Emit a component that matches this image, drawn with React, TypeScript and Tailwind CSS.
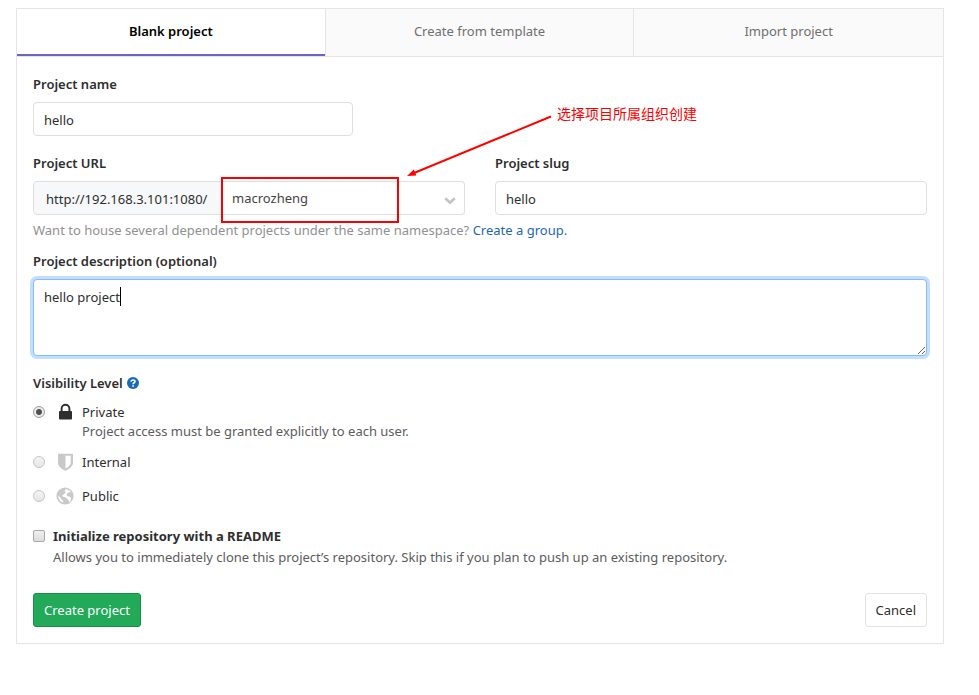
import type { ReactNode } from "react";

const inputClass =
  "block h-[34px] w-full rounded border border-[#dfdfdf] bg-white px-[10px] pt-px text-[#2e2e2e] outline-none";
const labelClass = "mb-2 block font-semibold text-[#2e2e2e]";
const tabClass = "h-[47px] border-[#e5e5e5] bg-[#fafafa] pb-[3px] text-[#707070]";
const radioClass =
  "size-3 shrink-0 appearance-none rounded-full border border-[#c6c6c6] bg-linear-to-b from-[#f4f4f4] to-[#e6e6e6] checked:border-[#9d9d9d] checked:bg-radial checked:from-[#505050] checked:from-35% checked:to-[#ececec] checked:to-50%";

function LockIcon() {
  return (
    <svg width="18" height="18" viewBox="0 0 18 18" fill="none" aria-hidden="true">
      <path d="M5.600 8.500V5.600a3.900 3.900 0 0 1 7.800 0v2.900" stroke="#2e2e2e" strokeWidth="1.900" />
      <rect x="3" y="8" width="13" height="8.500" rx="0.800" fill="#2e2e2e" />
    </svg>
  );
}

function ShieldIcon() {
  return (
    <svg width="18" height="18" viewBox="0 0 18 18" aria-hidden="true">
      <path
        fill="#c9c9c9"
        fillRule="evenodd"
        d="M2 .8h15v8.600c0 3.300-2.700 6.200-7.500 8.400C4.700 15.600 2 12.700 2 9.400V.8Zm7.500 2v12.800c3.400-1.800 5.200-3.900 5.200-6.200V2.800H9.500Z"
      />
    </svg>
  );
}

function GlobeIcon() {
  return (
    <svg width="18" height="18" viewBox="0 0 18 18" aria-hidden="true">
      <circle cx="9" cy="9" r="8.600" fill="#c9c9c9" />
      <path
        fill="#fff"
        d="M9.300 2.500 12.200 2.200l-.6 1.400 1.800-.4 1.800 2.200-1.900-.3-2.200 1.500-.6 1.700 1.500 1.300 2.100.2.900 1.400-.3 2.600-1.500 1.600-.8-2.500-2.600-2.400-2.700-.8-.9-1.300 1.700-1.200 1.900-1.900-1.200-1.300Z"
      />
      <path fill="#fff" d="m2.200 8.600 2.300 2.200 1.100 1.900 1.600 1.100-.1 1.900C4.200 14.700 2.200 12.200 2.200 8.600Z" />
    </svg>
  );
}

function HelpIcon() {
  return (
    <svg width="12" height="12" viewBox="0 0 12 12" fill="none" aria-hidden="true">
      <circle cx="6" cy="6" r="6" fill="#1b69b6" />
      <path d="M4 4.600C4.100 2.500 8 2.400 8 4.500 8 5.800 6.100 5.700 6.100 7.200" stroke="#fff" strokeWidth="1.600" />
      <path d="M5.200 8.200h1.700v1.600H5.200z" fill="#fff" />
    </svg>
  );
}

function VisibilityOption({
  value,
  label,
  icon,
  checked,
  children,
}: {
  value: string;
  label: string;
  icon: ReactNode;
  checked?: boolean;
  children?: ReactNode;
}) {
  return (
    <div>
      <label className="flex h-5 items-center">
        <input type="radio" name="visibility" value={value} defaultChecked={checked} className={radioClass} />
        <span className="ml-[11px] mr-2">{icon}</span>
        {label}
      </label>
      {children && <p className="-mt-px pl-[49px] text-[#5c5c5c]">{children}</p>}
    </div>
  );
}

export default function App() {
  return (
    <main className="min-h-screen bg-white pb-4 pl-4 pr-[35px] pt-2 font-['Noto_Sans','Noto_Sans_CJK_SC',sans-serif] text-[13px] leading-5 text-[#2e2e2e]">
      <div className="border border-[#e5e5e5]">
        <div role="tablist" className="grid grid-cols-3 border-b border-[#e5e5e5]">
          <button role="tab" aria-selected="true" className="flex h-[47px] border-r border-[#e5e5e5] font-semibold text-black">
            <span className="flex h-full flex-1 items-center justify-center border-b-2 border-[#6666c4] pb-px">
              Blank project
            </span>
          </button>
          <button role="tab" aria-selected="false" className={`${tabClass} border-r`}>
            Create from template
          </button>
          <button role="tab" aria-selected="false" className={tabClass}>
            Import project
          </button>
        </div>

        <form className="px-4 pb-4 pt-[17px]" onSubmit={(e) => e.preventDefault()}>
          <label htmlFor="name" className={labelClass}>Project name</label>
          <div className="max-w-80">
            <input id="name" defaultValue="hello" className={inputClass} />
          </div>

          <div className="mt-[17px] grid grid-cols-2 gap-[30px]">
            <div>
              <label htmlFor="namespace" className={labelClass}>Project URL</label>
              <div className="relative flex h-[34px]">
                <span className="flex w-[189px] shrink-0 items-center rounded-l border border-[#dfdfdf] bg-[#f7f8fa] pl-3 pt-px">
                  http://192.168.3.101:1080/
                </span>
                <select
                  id="namespace"
                  defaultValue="macrozheng"
                  className="min-w-0 flex-1 appearance-none rounded-r border border-l-0 border-[#dfdfdf] bg-white pl-[10px] pr-8 text-[#444] outline-none"
                >
                  <option>macrozheng</option>
                </select>
                <svg className="pointer-events-none absolute right-[9px] top-4" width="12" height="8" viewBox="0 0 12 8" fill="none" aria-hidden="true">
                  <path d="m1.200 1.200 4.800 4.600 4.800-4.600" stroke="#c4c4c4" strokeWidth="2.600" />
                </svg>
                <div className="pointer-events-none absolute -top-1 left-[188px] h-[46px] w-[178px] border-2 border-[#fe0000]" />
                <svg className="pointer-events-none absolute -top-[66px] left-[372px]" width="148" height="64" viewBox="0 0 148 64" aria-hidden="true">
                  <path d="M146 1.500 9 58" stroke="#fe0000" strokeWidth="2" />
                  <path d="m2 61 6.800-6.600 2.600 6.200Z" fill="#fe0000" />
                </svg>
                <p className="pointer-events-none absolute -top-[77px] left-[524px] whitespace-nowrap text-[14px] text-[#fe0000]">
                  选择项目所属组织创建
                </p>
              </div>
            </div>
            <div>
              <label htmlFor="slug" className={labelClass}>Project slug</label>
              <input id="slug" defaultValue="hello" className={inputClass} />
            </div>
          </div>
          <p className="mt-[5px] text-[#919191]">
            Want to house several dependent projects under the same namespace?{" "}
            <a href="#" className="text-[#1b69b6]">Create a group.</a>
          </p>

          <label htmlFor="description" className={`${labelClass} mt-[11px]`}>Project description (optional)</label>
          <div className="relative">
            <textarea
              id="description"
              defaultValue="hello project"
              className="block h-[77px] w-full rounded border border-[#80bdff] bg-white px-[10px] py-[7px] outline-none ring-3 ring-[#c5deff]"
            />
            <div className="pointer-events-none absolute left-[11px] top-2 flex" aria-hidden="true">
              <span className="invisible">hello project</span>
              <span className="h-[19px] w-px bg-black" />
            </div>
          </div>

          <fieldset className="mt-[17px]">
            <legend className="flex items-center gap-1 font-semibold">
              Visibility Level
              <HelpIcon />
            </legend>
            <div className="mt-[9px] flex flex-col">
              <VisibilityOption value="private" label="Private" icon={<LockIcon />} checked>
                Project access must be granted explicitly to each user.
              </VisibilityOption>
              <div className="mt-[11px] flex flex-col gap-[14px]">
                <VisibilityOption value="internal" label="Internal" icon={<ShieldIcon />} />
                <VisibilityOption value="public" label="Public" icon={<GlobeIcon />} />
              </div>
            </div>
          </fieldset>

          <div className="mt-5">
            <label className="flex items-center gap-2 font-bold">
              <input
                type="checkbox"
                className="size-3 appearance-none rounded-[2px] border border-[#a9a9a9] bg-linear-to-b from-[#efefef] to-[#dcdcdc]"
              />
              Initialize repository with a README
            </label>
            <p className="mt-px pl-5 text-[#5c5c5c]">
              Allows you to immediately clone this project’s repository. Skip this if you plan to push up an existing repository.
            </p>
          </div>

          <div className="mt-[26px] flex justify-between">
            <button type="submit" className="h-[34px] rounded-[3px] border border-[#168f48] bg-[#22aa59] px-[10px] text-white">
              Create project
            </button>
            <button type="button" className="h-[34px] rounded-[3px] border border-[#e3e3e3] bg-white px-[10px]">
              Cancel
            </button>
          </div>
        </form>
      </div>
    </main>
  );
}
